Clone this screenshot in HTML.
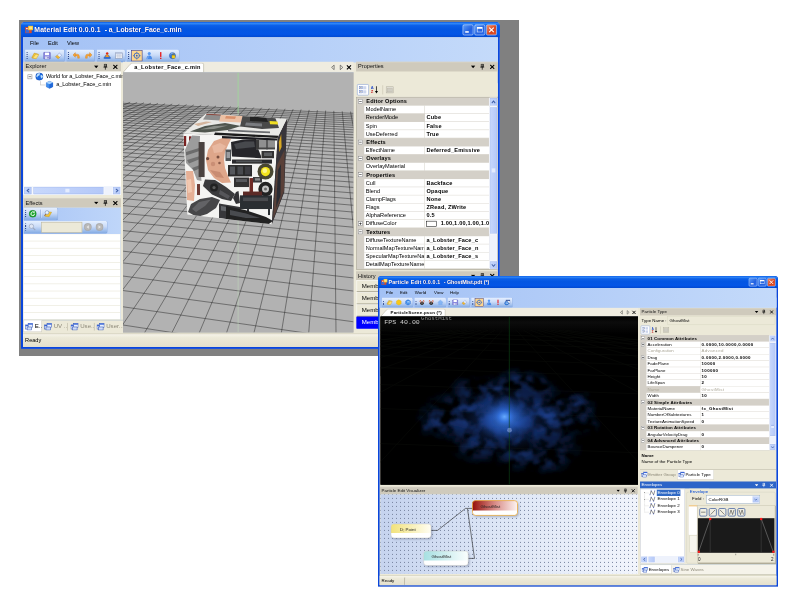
<!DOCTYPE html>
<html lang="en">
<head>
<meta charset="utf-8">
<title>Material Edit / Particle Edit</title>
<style>
*{box-sizing:border-box;margin:0;padding:0}
html,body{width:800px;height:600px;overflow:hidden;background:#fff}
body{position:relative;font-family:"Liberation Sans",sans-serif;font-size:11px;color:#000}
.a{position:absolute}
#bg1{left:19px;top:20px;width:500px;height:336px;background:#808080}
.win{position:absolute;transform-origin:0 0;overflow:hidden;background:#ece9d8;font-size:11px;line-height:13px;white-space:nowrap}
#w1{left:21px;top:22px;width:939px;height:641px;transform:scale(.51);border-radius:8px 8px 0 0}
#w2{left:378px;top:276px;width:1000px;height:777px;transform:scale(.4);border-radius:8px 8px 0 0}
.frame{position:absolute;left:0;top:0;right:0;bottom:0;background:#0a46dc}
.tbar{position:absolute;left:0;top:0;right:0;height:30px;background:linear-gradient(#0a5ce8 0,#2f86f7 3px,#0b5fe8 7px,#0456e2 14px,#0355e6 24px,#0148d0 30px);border-radius:8px 8px 0 0}
.ttl{position:absolute;left:26px;top:7px;color:#fff;font-weight:bold;font-size:13.6px;line-height:16px;text-shadow:1px 1px 0 #0a1883;white-space:pre}
.cb{position:absolute;top:5px;width:21px;height:21px;border:1px solid #fff;border-radius:3px;background:linear-gradient(135deg,#5c9cf8,#2260e0 60%,#2a6cf0)}
.cb.x{background:linear-gradient(135deg,#f0906c,#d8441c 60%,#e2542c)}
.client{position:absolute;left:4px;top:30px;right:4px;bottom:4px;background:#ece9d8}
.menu{position:absolute;left:0;top:0;right:0;height:49px;background:linear-gradient(to right,#a3c1f5,#c4dafa)}
.menu span{position:absolute;top:5px}
.tsc{position:absolute;left:0;right:0;background:linear-gradient(to right,#a3c1f5,#c4dafa)}
.ts{position:absolute;top:0;height:25px;background:linear-gradient(#e6f0ff 0,#cbdcf8 45%,#84abe4 100%);border-radius:0 4px 4px 0;border-bottom:1px solid #5f86c8;border-right:1px solid #7d9fd8}
.grip{position:absolute;left:3px;top:5px;width:2px;height:14px;background:repeating-linear-gradient(#27418a 0,#27418a 2px,transparent 2px,transparent 4px)}
.ic{position:absolute;top:4px;width:16px;height:16px}
.cap{position:absolute;height:19px;background:#cfcabc;color:#111;padding:2px 0 0 4px;border-top:1px solid #e0ddd0}
.cap.act{background:#2c64c8;color:#fff}
.cap i{position:absolute;top:2px;font-style:normal;font-size:11px;font-weight:bold}
.pane{position:absolute;background:#fff}
.row{position:absolute;left:0;right:0;height:16px;line-height:15px}
.pgc{background:#d4d0c8;font-weight:bold;letter-spacing:.25px}
.pgl{position:absolute;top:0;height:16px;background:#fff;border-bottom:1px solid #d4d0c8;border-right:1px solid #d4d0c8;padding-left:3px;overflow:hidden}
.pgv{position:absolute;top:0;height:16px;background:#fff;border-bottom:1px solid #d4d0c8;font-weight:bold;padding-left:3px;overflow:hidden;letter-spacing:.35px}
.pm{position:absolute;width:9px;height:9px;border:1px solid #808080;background:#fff;top:3px}
.pm:before{content:"";position:absolute;left:1px;top:3px;width:5px;height:1px;background:#000}
.pm.plus:after{content:"";position:absolute;left:3px;top:1px;width:1px;height:5px;background:#000}
.sb{position:absolute;background:#f4f3ee}
.sbb{position:absolute;background:linear-gradient(to right,#c8d8fc,#b4c8f8);border:1px solid #fff;border-radius:2px;box-shadow:0 0 0 1px #98b0e8 inset}
.tabs{position:absolute;background:#ece9d8}
.status{position:absolute;left:0;right:0;bottom:0;background:linear-gradient(#f6f4ea,#ece9d8 30%,#e4e0cc);border-top:1px solid #c8c4b0}
#w2 .pgv{letter-spacing:.8px}
#w2 .pgc{letter-spacing:.3px}
</style>
</head>
<body>
<div id="bg1" class="a"></div>
<div id="w1" class="win"><div class="frame"></div>
<div class="tbar">
<svg class="a" style="left:8px;top:7px" width="16" height="16" viewBox="0 0 16 16"><rect x="0" y="3" width="13" height="12" fill="#d84a2a"/><rect x="1" y="8" width="7" height="6" fill="#3a6ad8"/><rect x="6" y="0" width="10" height="9" fill="#f6c634"/><rect x="8" y="2" width="6" height="5" fill="#fde88a"/><rect x="2" y="5" width="3" height="2" fill="#fff"/></svg>
<div class="ttl"><span style="letter-spacing:.2px">Material Edit 0.0.0.1  </span><span style="letter-spacing:-.2px">- a_Lobster_Face_c.min</span></div>
<div class="cb" style="left:866px"><div class="a" style="left:4px;top:12px;width:7px;height:3px;background:#fff"></div></div>
<div class="cb" style="left:889px"><div class="a" style="left:4px;top:4px;width:11px;height:10px;border:1px solid #fff;border-top-width:3px"></div></div>
<div class="cb x" style="left:912px"><svg class="a" style="left:3px;top:3px" width="13" height="13" viewBox="0 0 13 13"><path d="M2 2L11 11M11 2L2 11" stroke="#fff" stroke-width="2.2"/></svg></div>
</div>
<div class="client">
<div class="menu"><span style="left:13.5px">File</span><span style="left:49px">Edit</span><span style="left:86px">View</span></div>
<div class="tsc" style="top:24px;height:25px">
<div class="ts" style="left:4px;width:78px"><div class="grip"></div><svg class="ic" style="left:11.5px" viewBox="0 0 16 16"><path d="M1 12L6 3l8 2-5 9z" fill="#f2c53a" stroke="#b88a18" stroke-width=".8"/><path d="M3 13L9 5l6 1-5 8z" fill="#fbe27a" stroke="#c89a20" stroke-width=".7"/></svg><svg class="ic" style="left:34.5px" viewBox="0 0 16 16"><rect x="1.5" y="1.5" width="13" height="13" rx="1" fill="#8a88e0" stroke="#5a58b8"/><rect x="4" y="2" width="8" height="5" fill="#fff"/><rect x="4" y="9.5" width="8" height="5" fill="#d8d8f0"/><rect x="9" y="10.5" width="2" height="3" fill="#5a58b8"/></svg><svg class="ic" style="left:57.5px" viewBox="0 0 16 16"><path d="M2 10l7-7 5 4-7 7z" fill="#e8eefc" stroke="#6a86c8" stroke-width=".8"/><path d="M2 10l3-3 5 4-3 3z" fill="#f2b830" stroke="#b88a18" stroke-width=".7"/></svg></div>
<div class="ts" style="left:85px;width:56px"><div class="grip"></div><svg class="ic" style="left:11.5px" viewBox="0 0 16 16"><path d="M3 5h6a4.5 4.5 0 0 1 4.5 4.5V13h-3.5V9.8a1.3 1.3 0 0 0-1.3-1.3H3z" fill="#f7a43a" stroke="#d07c10" stroke-width=".7"/><path d="M5.5 2L1 6.7l4.5 4.4z" fill="#f7a43a" stroke="#d07c10" stroke-width=".7"/></svg><svg class="ic" style="left:34.5px" viewBox="0 0 16 16"><g transform="matrix(-1 0 0 1 16 0)"><path d="M3 5h6a4.5 4.5 0 0 1 4.5 4.5V13h-3.5V9.8a1.3 1.3 0 0 0-1.3-1.3H3z" fill="#f7a43a" stroke="#d07c10" stroke-width=".7"/><path d="M5.5 2L1 6.7l4.5 4.4z" fill="#f7a43a" stroke="#d07c10" stroke-width=".7"/></g></svg></div>
<div class="ts" style="left:145px;width:56px"><div class="grip"></div><svg class="ic" style="left:11.5px" viewBox="0 0 16 16"><path d="M1 13l4-6h6l4 6z" fill="#4a88e0" stroke="#2858b0" stroke-width=".7"/><path d="M4 11l4-7 4 7z" fill="#f4a030" stroke="#b86a10" stroke-width=".7"/><circle cx="8" cy="3.5" r="2.3" fill="#e02818"/><rect x="2" y="11" width="12" height="3" fill="#2a68d0"/></svg><svg class="ic" style="left:34.5px" viewBox="0 0 16 16"><rect x="1.5" y="2.5" width="13" height="11" fill="#fff" stroke="#7c88a8"/><rect x="2" y="3" width="12" height="2.5" fill="#b8c4e0"/><path d="M2 8h12M2 10.5h12M6 5v8M10 5v8" stroke="#a0a8c0" stroke-width=".8"/></svg></div>
<div class="ts" style="left:203px;width:104px"><div class="grip"></div><div class="a" style="left:9px;top:1px;width:22px;height:22px;background:#fdd58c;border:1px solid #1a2a9c"></div><svg class="ic" style="left:12px" viewBox="0 0 16 16"><circle cx="8" cy="8" r="5.2" fill="none" stroke="#2860c8" stroke-width="1.6"/><circle cx="8" cy="8" r="1.8" fill="#2860c8"/><path d="M8 0v4M8 12v4M0 8h4M12 8h4" stroke="#2860c8" stroke-width="1.2"/></svg><svg class="ic" style="left:35.5px" viewBox="0 0 16 16"><circle cx="8.5" cy="4" r="3" fill="#5a9af0"/><path d="M3 15c0-5 2-7.5 5.5-7.5S14 10 14 15z" fill="#4a8ae8"/><path d="M5 15c0-3 1-5 3-5" stroke="#9cc4fa" stroke-width="1.2" fill="none"/></svg><svg class="ic" style="left:58.5px" viewBox="0 0 16 16"><rect x="6.7" y="1" width="2.6" height="9.5" fill="#e81818"/><rect x="6.7" y="12" width="2.6" height="2.6" fill="#e81818"/></svg><svg class="ic" style="left:81.5px" viewBox="0 0 16 16"><circle cx="8" cy="8" r="6" fill="#3a78d8" stroke="#1a48a0" stroke-width=".8"/><path d="M4 5a5 5 0 0 1 8 0" stroke="#bfe0ff" stroke-width="1.5" fill="none"/><rect x="7" y="7" width="6" height="6" fill="#f4d020" stroke="#a08010" stroke-width=".6"/><path d="M8.5 7V5.5a1.5 1.5 0 0 1 3 0V7" stroke="#806808" stroke-width="1" fill="none"/></svg></div>
</div>
<div class="cap" style="left:1px;top:48px;width:191px;height:19px">Explorer<svg class="a" style="right:44px;top:6px" width="9" height="6" viewBox="0 0 9 6"><path d="M0 0.5h9L4.5 5.5z" fill="#000"/></svg><svg class="a" style="right:26px;top:3px" width="9" height="12" viewBox="0 0 9 12"><path d="M2.5 .5h4v5.5h-4zM.5 6.5h8M4.5 6.5v5" stroke="#000" stroke-width="1.3" fill="none"/><path d="M5.5 1v5" stroke="#000" stroke-width="1.2"/></svg><svg class="a" style="right:6px;top:4px" width="10" height="10" viewBox="0 0 10 10"><path d="M1 1l8 8M9 1L1 9" stroke="#000" stroke-width="2.1"/></svg></div>
<div class="pane" style="left:1px;top:67px;width:191px;height:242px">
<div class="pm" style="left:8px;top:6px"></div>
<div class="a" style="left:12px;top:10px;width:0;height:0"></div>
<div class="a" style="left:33px;top:19px;width:1px;height:8px;background:#b0b0b0"></div><div class="a" style="left:33px;top:26px;width:10px;height:1px;background:#b0b0b0"></div>
<svg class="a" style="left:23px;top:2px" width="16" height="16" viewBox="0 0 16 16"><circle cx="8" cy="8" r="7.3" fill="#1c6ae0"/><circle cx="8" cy="8" r="7.3" fill="none" stroke="#0c3ca0" stroke-width=".7"/><path d="M3 5c2-3 5-3 6-2l-1 3-3 1-1 3-2-2zM10 6l3-1 2 3-2 4-2-2z" fill="#bfe4ff"/><path d="M3.5 3.5a6 6 0 0 1 6-1.5" stroke="#e8f6ff" stroke-width="1.2" fill="none"/></svg>
<div class="a" style="left:44px;top:3px;letter-spacing:-.2px">World for a_Lobster_Face_c.min</div>
<svg class="a" style="left:43px;top:18px" width="16" height="16" viewBox="0 0 16 16"><path d="M8 1l6.5 3v8L8 15.5 1.5 12V4z" fill="#3c8cf0" stroke="#1c54b8" stroke-width=".7"/><path d="M8 1l6.5 3L8 7.2 1.5 4z" fill="#a8d4ff"/><path d="M8 7.2V15.5" stroke="#1c54b8" stroke-width=".6"/><path d="M8 7.2l6.5-3.2v8L8 15.5z" fill="#2068d8"/></svg>
<div class="a" style="left:64px;top:19px;letter-spacing:-.2px">a_Lobster_Face_c.min</div>
<div class="sb" style="left:0;bottom:0;width:191px;height:17px;background:#eef2fc">
<div class="sbb" style="left:0;top:0;width:17px;height:17px"><svg class="a" style="left:4px;top:3px" width="8" height="9" viewBox="0 0 8 9"><path d="M6 1L2 4.5 6 8" stroke="#4060a8" stroke-width="2" fill="none"/></svg></div>
<div class="sbb" style="left:18px;top:0;width:140px;height:17px"><div class="a" style="left:63px;top:4px;width:8px;height:7px;background:repeating-linear-gradient(to right,#e4ecfe 0,#e4ecfe 1px,#a4b8ec 1px,#a4b8ec 2px)"></div></div>
<div class="sbb" style="left:174px;top:0;width:17px;height:17px"><svg class="a" style="left:4px;top:3px" width="8" height="9" viewBox="0 0 8 9"><path d="M2 1l4 3.5L2 8" stroke="#4060a8" stroke-width="2" fill="none"/></svg></div>
</div></div>
<div class="cap" style="left:1px;top:315px;width:191px;height:19px">Effects<svg class="a" style="right:44px;top:6px" width="9" height="6" viewBox="0 0 9 6"><path d="M0 0.5h9L4.5 5.5z" fill="#000"/></svg><svg class="a" style="right:26px;top:3px" width="9" height="12" viewBox="0 0 9 12"><path d="M2.5 .5h4v5.5h-4zM.5 6.5h8M4.5 6.5v5" stroke="#000" stroke-width="1.3" fill="none"/><path d="M5.5 1v5" stroke="#000" stroke-width="1.2"/></svg><svg class="a" style="right:6px;top:4px" width="10" height="10" viewBox="0 0 10 10"><path d="M1 1l8 8M9 1L1 9" stroke="#000" stroke-width="2.1"/></svg></div>
<div class="tsc" style="left:1px;top:334px;width:191px;right:auto;height:52px;background:linear-gradient(to right,#a9c5f6,#bfd6f9)"></div>
<div class="ts" style="left:1px;top:334px;width:68px"><div class="grip"></div><svg class="ic" style="left:10px" viewBox="0 0 16 16"><circle cx="8" cy="8" r="7" fill="#1ea830" stroke="#0c7018" stroke-width=".8"/><path d="M11.5 8a3.5 3.5 0 1 1-1.2-2.6" stroke="#fff" stroke-width="1.8" fill="none"/><path d="M9 3.2l3.2.6-1 3z" fill="#fff"/></svg><div class="a" style="left:33px;top:4px;width:1px;height:16px;background:#6a8ccc"></div><div class="a" style="left:34px;top:4px;width:1px;height:16px;background:#f0f6ff"></div><svg class="ic" style="left:40px" viewBox="0 0 16 16"><path d="M2 13l6-9 7 1-5 9z" fill="#f4c430" stroke="#b88a10" stroke-width=".7"/><circle cx="6" cy="5.5" r="3.6" fill="#e8f2ff" stroke="#7890b8" stroke-width="1.2"/><path d="M3.5 8.5L1 12" stroke="#a06020" stroke-width="1.8"/></svg></div>
<div class="ts" style="left:1px;top:360px;width:165px"><div class="grip"></div><svg class="ic" style="left:9px" viewBox="0 0 16 16"><circle cx="6.5" cy="6.5" r="4.3" fill="#dfe6f4" stroke="#9aa6c0" stroke-width="1.4"/><path d="M9.5 9.5L14 14" stroke="#9aa6c0" stroke-width="2.2"/></svg><div class="a" style="left:35px;top:2px;width:80px;height:21px;background:#ece9d8;border:1px solid #b4b09c"></div><svg class="ic" style="left:118px" viewBox="0 0 16 16"><circle cx="8" cy="8" r="7.2" fill="#b8b8b8" stroke="#989898" stroke-width=".8"/><path d="M10 4.5L5.5 8l4.5 3.5z" fill="#e8e8e8"/></svg><svg class="ic" style="left:141px" viewBox="0 0 16 16"><circle cx="8" cy="8" r="7.2" fill="#b8b8b8" stroke="#989898" stroke-width=".8"/><path d="M6 4.5L10.500 8 6 11.5z" fill="#e8e8e8"/></svg></div>
<div class="pane" style="left:1px;top:386px;width:191px;height:168px;border-right:1px solid #b8c8d8"><div class="a" style="left:0;right:0;top:13px;height:1px;background:#e4e2d0"></div><div class="a" style="left:0;right:0;top:27px;height:1px;background:#e4e2d0"></div><div class="a" style="left:0;right:0;top:41px;height:1px;background:#e4e2d0"></div><div class="a" style="left:0;right:0;top:55px;height:1px;background:#e4e2d0"></div><div class="a" style="left:0;right:0;top:69px;height:1px;background:#e4e2d0"></div><div class="a" style="left:0;right:0;top:83px;height:1px;background:#e4e2d0"></div><div class="a" style="left:0;right:0;top:97px;height:1px;background:#e4e2d0"></div><div class="a" style="left:0;right:0;top:111px;height:1px;background:#e4e2d0"></div><div class="a" style="left:0;right:0;top:125px;height:1px;background:#e4e2d0"></div><div class="a" style="left:0;right:0;top:139px;height:1px;background:#e4e2d0"></div><div class="a" style="left:0;right:0;top:153px;height:1px;background:#e4e2d0"></div><div class="a" style="left:0;right:0;top:167px;height:1px;background:#e4e2d0"></div></div>
<div class="tabs" style="left:1px;top:554px;width:195px;height:27px;border-top:1px solid #a8b8c8">
<div class="a" style="left:0px;top:0;width:36px;height:23px;background:#fff;border:1px solid #c8c4b4;border-top:none;color:#000;"><svg class="a" style="left:2px;top:4px" width="16" height="16" viewBox="0 0 16 16"><rect x="1" y="5" width="9" height="8" fill="#e8f0ff" stroke="#2a4cb0"/><rect x="1" y="5" width="9" height="2.5" fill="#3a66d8"/><rect x="6" y="2" width="9" height="8" fill="#e8f0ff" stroke="#2a4cb0"/><rect x="6" y="2" width="9" height="2.5" fill="#3a66d8"/><rect x="4" y="9" width="9" height="6" fill="#cfdcf8" stroke="#2a4cb0"/></svg><span class="a" style="left:21px;top:5px;font-size:12px">E..</span></div><div class="a" style="left:38px;top:0;width:48px;height:23px;color:#8c8878;"><svg class="a" style="left:2px;top:4px" width="16" height="16" viewBox="0 0 16 16"><rect x="1" y="5" width="9" height="8" fill="#e8f0ff" stroke="#2a4cb0"/><rect x="1" y="5" width="9" height="2.5" fill="#3a66d8"/><rect x="6" y="2" width="9" height="8" fill="#e8f0ff" stroke="#2a4cb0"/><rect x="6" y="2" width="9" height="2.5" fill="#3a66d8"/><rect x="4" y="9" width="9" height="6" fill="#cfdcf8" stroke="#2a4cb0"/></svg><span class="a" style="left:21px;top:5px;font-size:12px">UV ..</span></div><div class="a" style="left:90px;top:0;width:48px;height:23px;color:#8c8878;"><svg class="a" style="left:2px;top:4px" width="16" height="16" viewBox="0 0 16 16"><rect x="1" y="5" width="9" height="8" fill="#e8f0ff" stroke="#2a4cb0"/><rect x="1" y="5" width="9" height="2.5" fill="#3a66d8"/><rect x="6" y="2" width="9" height="8" fill="#e8f0ff" stroke="#2a4cb0"/><rect x="6" y="2" width="9" height="2.5" fill="#3a66d8"/><rect x="4" y="9" width="9" height="6" fill="#cfdcf8" stroke="#2a4cb0"/></svg><span class="a" style="left:21px;top:5px;font-size:12px">Use..</span></div><div class="a" style="left:141px;top:0;width:54px;height:23px;color:#8c8878;"><svg class="a" style="left:2px;top:4px" width="16" height="16" viewBox="0 0 16 16"><rect x="1" y="5" width="9" height="8" fill="#e8f0ff" stroke="#2a4cb0"/><rect x="1" y="5" width="9" height="2.5" fill="#3a66d8"/><rect x="6" y="2" width="9" height="8" fill="#e8f0ff" stroke="#2a4cb0"/><rect x="6" y="2" width="9" height="2.5" fill="#3a66d8"/><rect x="4" y="9" width="9" height="6" fill="#cfdcf8" stroke="#2a4cb0"/></svg><span class="a" style="left:21px;top:5px;font-size:12px">User...</span></div>
<div class="a" style="left:86px;top:5px;width:1px;height:15px;background:#b0ac98"></div><div class="a" style="left:138px;top:5px;width:1px;height:15px;background:#b0ac98"></div>
</div>
<div class="a" style="left:196px;top:48px;width:452px;height:21px;background:#efece0;border-bottom:1px solid #9cb4dc"></div>
<svg class="a" style="left:196px;top:50px" width="170" height="19" viewBox="0 0 170 19"><path d="M0 19L14 3q2-2.500 5-2.500H155q3 0 3 3V19z" fill="#fff" stroke="#a8a490" stroke-width="1"/></svg>
<div class="a" style="left:218px;top:53px;font-weight:bold;letter-spacing:.6px">a_Lobster_Face_c.min</div>
<svg class="a" style="left:603px;top:53px" width="42" height="12" viewBox="0 0 42 12"><path d="M7 1.500L2 6l5 4.500z" fill="none" stroke="#333" stroke-width="1.100"/><path d="M19 1.500L24 6l-5 4.500z" fill="none" stroke="#333" stroke-width="1.100"/><path d="M32 2l8 8M40 2l-8 8" stroke="#000" stroke-width="2.200"/></svg>
<div class="a" style="left:196px;top:69px;width:452px;height:510px;overflow:hidden;background:#b2b2b2"><svg class="a" style="left:0;top:0" width="452" height="510" viewBox="123 72.5 230.5 260" preserveAspectRatio="none"><defs><filter id="bl1" x="160" y="100" width="150" height="140" filterUnits="userSpaceOnUse"><feGaussianBlur stdDeviation=".65"/></filter></defs><rect x="100" y="60" width="300" height="300" fill="#b2b2b2"/><path d="M83.3 100.2L-1906.3 783.1M79.7 101.4L535.9 121.3M89.9 100.4L-1906.1 806.4M75.7 102.8L539.9 123.4M96.5 100.7L-1905.9 831.1M71.5 104.2L544.1 125.6M103.1 101L-1905.7 857.5M67.1 105.7L548.5 127.9M109.8 101.3L-1905.4 885.6M62.6 107.3L553 130.3M116.6 101.6L-1905.2 915.6M58 108.9L557.8 132.8M123.4 101.9L-1904.9 947.8M53.2 110.5L562.7 135.4M130.2 102.2L-1904.6 982.4M48.2 112.2L567.9 138.1M137.1 102.5L-1904.3 1019.7M43 114L573.3 141M144 102.8L-1903.9 1059.9M37.7 115.8L579 144M151 103.1L-1903.5 1103.5M32.1 117.7L585 147.1M158 103.4L-1903.1 1150.9M26.3 119.7L591.2 150.4M165.1 103.7L-1902.7 1202.5M20.3 121.8L597.8 153.8M172.2 104L-1902.2 1259.1M14.1 123.9L604.7 157.4M179.4 104.3L-1901.6 1321.4M7.6 126.1L611.9 161.3M186.6 104.6L-1901 1390.3M0.9 128.5L619.6 165.3M193.8 104.9L-1900.3 1466.7M-6.2 130.9L627.7 169.6M201.2 105.2L-1899.6 1552.2M-13.5 133.4L636.3 174.1M208.5 105.5L-1898.7 1648.4M-21.2 136L645.4 178.9M216 105.9L-1897.8 1757.4M-29.2 138.8L655 183.9M223.4 106.2L-1896.7 1882.1M-37.6 141.7L665.3 189.3M230.9 106.5L-1895.4 2025.9M-46.4 144.7L676.3 195.1M238.5 106.8L-1893.9 2193.6M-55.6 147.9L687.9 201.2M246.2 107.2L-1892.2 2392M-65.3 151.2L700.5 207.8M253.8 107.5L-1890.1 2630M-75.5 154.7L713.9 214.9M261.6 107.8L-1887.5 2921.1M-86.2 158.3L728.3 222.5M269.4 108.2L-1884.3 3285M-97.5 162.2L743.9 230.7M277.2 108.5L-1880.2 3753.1M-109.4 166.3L760.8 239.5M285.1 108.8L-1874.7 4377.5M-122 170.6L779.1 249.2M293.1 109.2L-1867 5252.4M-135.3 175.2L799 259.6M301.1 109.5L-1842.4 6527M-149.4 180L820.8 271.1M309.2 109.9L-1282.5 6527M-164.4 185.2L844.8 283.7M317.4 110.2L-722.5 6527M-180.4 190.7L871.2 297.6M325.6 110.6L-162.5 6527M-197.4 196.5L900.5 313M333.8 110.9L397.4 6527M-215.6 202.8L933.2 330.2M342.2 111.3L957.4 6527M-235.1 209.5L969.8 349.5M350.5 111.6L1517.3 6527M-256.1 216.6L1011.2 371.2M359 112L2077.3 6527M-278.6 224.4L1058.4 396.1M367.5 112.4L2637.2 6527M-302.9 232.7L1112.6 424.6M376.1 112.7L3197.2 6527M-329.3 241.8L1175.6 457.7M384.7 113.1L3757.1 6527M-357.9 251.6L1249.7 496.7M393.4 113.5L4317.1 6527M-389.1 262.3L1338.1 543.1M402.2 113.8L4877 6527M-423.2 274L1445.3 599.5M411 114.2L5437 6527M-460.8 286.9L1578.1 669.3M419.9 114.6L5997 6527M-502.3 301.1L1746.9 758.1M428.9 115L6556.9 6527M-548.3 317L1968.6 874.7M438 115.4L7116.9 6527M-599.7 334.6L2272.8 1034.7M447.1 115.8L7676.8 6527M-657.5 354.4L2716 1267.8M456.3 116.2L8236.8 6527M-722.9 376.9L3421.7 1638.9M465.5 116.6L8796.7 6527M-797.6 402.5L4721.1 2322.2M474.8 117L9356.7 6527M-883.7 432.1L7907.6 3998M484.3 117.4L9916.6 6527M-983.9 466.5L11475.9 6527M493.7 117.8L10476.6 6527M-1102.1 507L8809.6 6527M503.3 118.2L11036.5 6527M-1243.7 555.6L6143.2 6527M512.9 118.6L11596.5 6527M-1416.2 614.9L3476.9 6527M522.6 119L12156.4 6527M-1631.2 688.6L810.5 6527M532.4 119.4L12716.4 6527M-1906.3 783.1L-1855.8 6527" stroke="#1e1e1e" stroke-width=".5" fill="none" opacity=".92"/><path d="M238.1 72V332" stroke="#c4e8c0" stroke-width=".5" opacity=".8"/><polygon points="183.4,133.6 277.7,137.9 271.8,224.2 187.3,214.4" fill="#f4f4f2"/><polygon points="205.8,113.4 287,119.1 277.7,137.9 183.4,133.6" fill="#e9e9e6"/><polygon points="277.7,137.9 287,119.1 284.2,192.1 271.8,224.2" fill="#3a3836"/><clipPath id="cf"><polygon points="183.4,133.6 277.7,137.9 271.8,224.2 187.3,214.4"/></clipPath><clipPath id="ct"><polygon points="205.8,113.4 287,119.1 277.7,137.9 183.4,133.6"/></clipPath><clipPath id="cr"><polygon points="277.7,137.9 287,119.1 284.2,192.1 271.8,224.2"/></clipPath><g clip-path="url(#cf)"><g filter="url(#bl1)"><rect x="183.8" y="136" width="2.4" height="10" fill="#7a2224"/><rect x="189" y="136.3" width="2.5" height="10" fill="#7a2224"/><rect x="187" y="146" width="1" height="4" fill="#7a2224"/><polygon points="192,135.5 200,136 199.5,150 200,165 201.5,181 197,180 193,170 186,163 185,150 188,143" fill="#9c9c9c"/><polygon points="186,152 199,148 199.5,151 186,155.5" fill="#6c6c6c"/><polygon points="187,160 200,156 200,159 189,163.5" fill="#707070"/><polygon points="192,168 200,165 200.5,168 194,171" fill="#6c6c6c"/><rect x="198.6" y="142" width="6" height="35" fill="#4a4240"/><polygon points="231,139 224,137.5 214,141 208,150 206,160 208,170 214,178 222,183 231,182.5 228,176 225,168 224,160 225,152 228,145" fill="#dea68a"/><polygon points="212,146 220,143 226,146 222,152 214,153" fill="#e8b8a0"/><circle cx="207.6" cy="158.6" r="1.6" fill="#6a4438"/><circle cx="218" cy="157" r="1.5" fill="#7a5040"/><circle cx="219.5" cy="163" r="1.3" fill="#8a5a48"/><circle cx="213" cy="164" r="2.2" fill="#c98e74"/><polygon points="210,170 220,172 224,178 216,177" fill="#c88c72"/><rect x="225.5" y="149.5" width="5.5" height="11.5" fill="#505256"/><rect x="226.5" y="152" width="3.5" height="6" fill="#9a9ca0"/><polygon points="231,142 243,139.5 256,139 257,146 261,156 261,158.2 232,156.5 231.5,150" fill="#28282c"/><polygon points="234,144 245,141.5 254,141.5 255,147 236,149" fill="#46484e"/><rect x="256" y="140" width="19" height="9.3" fill="#909090"/><rect x="256" y="140" width="3" height="9.3" fill="#3a3a3a"/><rect x="266" y="140" width="2" height="9.3" fill="#5a5a5a"/><rect x="259" y="147.5" width="16" height="1.8" fill="#444"/><rect x="261.5" y="151" width="12.5" height="7.2" fill="#303032"/><rect x="264" y="152.5" width="8" height="3.5" fill="#5c5e62"/><rect x="232" y="159.5" width="40" height="4.1" fill="#2c2c2e"/><rect x="236" y="160.5" width="26" height="1.7" fill="#505256"/><rect x="228" y="165" width="24" height="11.4" fill="#2a2a2c"/><rect x="230" y="166.5" width="5" height="8" fill="#55585c"/><rect x="237.5" y="166.5" width="5.5" height="8" fill="#4a4c50"/><rect x="245" y="166.5" width="5.5" height="8" fill="#3c3e42"/><rect x="234" y="177.5" width="15" height="9.5" fill="#303032"/><rect x="236" y="179" width="11" height="3" fill="#56585c"/><circle cx="265.5" cy="171.5" r="8" fill="#4a4630"/><circle cx="265.5" cy="171.5" r="4.6" fill="#f4e41c"/><circle cx="264.8" cy="170.6" r="2.3" fill="#fff58a"/><rect x="253" y="177" width="9" height="5.5" fill="#38383a"/><rect x="255" y="178.2" width="5" height="2.4" fill="#8a8a8a"/><circle cx="265.5" cy="189" r="7.2" fill="#202022"/><circle cx="265.5" cy="189" r="3.5" fill="#c4c4c4"/><circle cx="265.5" cy="189" r="1.5" fill="#6a6a6a"/><rect x="249.5" y="178" width="3.5" height="15" fill="#6e2a26"/><rect x="243" y="191.5" width="19" height="4.5" fill="#5c2c26"/><rect x="240" y="195.3" width="32" height="13.7" fill="#2c2e32"/><rect x="243" y="197.5" width="25" height="3.5" fill="#484b50"/><rect x="247" y="209" width="2" height="5" fill="#2c2e32"/><rect x="268" y="209" width="2" height="6" fill="#2c2e32"/><polygon points="219,203.5 240,207 240,221 219,218" fill="#38383a"/><polygon points="221,206 238,209 238,213 221,210.5" fill="#64666a"/><polygon points="226,206 245,210 266,217 273,221 268,224.5 250,223 226,219" fill="#222224"/><polygon points="230,210 246,213.5 260,218 246,218 230,215" fill="#4a4c50"/><polygon points="203,186 205,179.5 215,180 226,187 235,194 231,201 222,199 212,194.5" fill="#3a3a3c"/><circle cx="214" cy="187.5" r="4" fill="#242424"/><circle cx="214" cy="187.5" r="1.6" fill="#5a5a5a"/><polygon points="220,190 230,196 228,199 219,194" fill="#56565a"/><polygon points="236,192 238.5,191 240,203 236,204 233,198" fill="#323234"/><polygon points="188,212 191,204 200,199 212,197 220,200 216,208 207,214 197,217" fill="#464648"/><polygon points="192,209 199,202 211,199.5 205,206 196,212" fill="#646466"/><polygon points="186,171 193,171 195,185 194,201 187,200" fill="#e6b096"/><polygon points="187,180 191,179 192,192 188,193" fill="#f2c8b0"/><rect x="197" y="184" width="3" height="11" fill="#6e3a34"/><polygon points="222,136 277.6,138.4 277.4,140.6 222,138.2" fill="#1e1e20"/></g></g><g clip-path="url(#ct)"><g filter="url(#bl1)"><polygon points="207,113.5 221,114.2 220,120.5 203,119.5" fill="#8e8e8e"/><polygon points="207,113.5 221,114.2 220.8,115.6 206,114.8" fill="#8a4a40"/><polygon points="221,115 243,116 241,122.5 219,121.5" fill="#ecc0a4"/><polygon points="226,116 236,116.5 235,119 225,118.5" fill="#d8906c"/><polygon points="190,131.5 205,126 225,123 241,126 228,130 205,132.5" fill="#50544e"/><polygon points="200,129.5 214,126 228,125.5 214,129" fill="#8a8e88"/><polygon points="243,114 275,117 279,128 262,129 240,126.5" fill="#48484a"/><polygon points="250,116 266,117.5 268,122 250,121" fill="#222"/><polygon points="246,122.5 262,123.5 262,126.5 245,125.5" fill="#7a7c80"/><polygon points="269.5,121 277.5,121.5 278,124.5 270,124.2" fill="#f0de20"/><polygon points="215,132.5 278.5,135.8 277.7,138.2 214,135" fill="#1c1c1e"/><polygon points="228,129.5 270,131.5 270,133.3 228,131.3" fill="#6a6c70"/><polygon points="194,124 206,121.5 212,122 198,126" fill="#d4b49c"/></g></g><g clip-path="url(#cr)"><g filter="url(#bl1)"><polygon points="277.7,137.9 287,119.1 284.2,192.1 271.8,224.2" fill="#38343a"/><polygon points="278.8,142 281.2,134 281.6,147 279.3,152" fill="#d8a820"/><polygon points="277,165 284.5,150 284.3,190 273,219" fill="#5a4038"/><polygon points="278,170 281,164 280.5,196 276,208" fill="#2c2c30"/></g></g><path d="M238.1 72V113" stroke="#8cd488" stroke-width=".55"/></svg></div>
<div class="cap" style="left:653px;top:48px;width:278px;height:19px">Properties<svg class="a" style="right:44px;top:6px" width="9" height="6" viewBox="0 0 9 6"><path d="M0 0.5h9L4.5 5.5z" fill="#000"/></svg><svg class="a" style="right:26px;top:3px" width="9" height="12" viewBox="0 0 9 12"><path d="M2.5 .5h4v5.5h-4zM.5 6.5h8M4.5 6.5v5" stroke="#000" stroke-width="1.3" fill="none"/><path d="M5.5 1v5" stroke="#000" stroke-width="1.2"/></svg><svg class="a" style="right:6px;top:4px" width="10" height="10" viewBox="0 0 10 10"><path d="M1 1l8 8M9 1L1 9" stroke="#000" stroke-width="2.1"/></svg></div>
<div class="a" style="left:653px;top:90px;width:278px;height:26px;background:#ece9d8"></div>
<div class="a" style="left:655px;top:92px;width:23px;height:22px;background:#fff;border:1px solid #7c98d0;border-radius:2px"></div>
<svg class="a" style="left:659px;top:95px" width="16" height="16" viewBox="0 0 16 16"><rect x="1" y="1" width="5" height="5" fill="#fff" stroke="#4868b8" stroke-width=".9"/><rect x="1" y="9" width="5" height="5" fill="#fff" stroke="#4868b8" stroke-width=".9"/><path d="M2.500 3.500h2M2.500 11.500h2" stroke="#000"/><path d="M8 2h6M8 4h6M8 6h6M8 10h6M8 12h6M8 14h6" stroke="#90a4d8" stroke-width="1"/></svg>
<svg class="a" style="left:682px;top:95px" width="16" height="16" viewBox="0 0 16 16"><text x="0" y="7" font-size="8" font-weight="bold" fill="#2c50c8" font-family="Liberation Sans,sans-serif">A</text><text x="0" y="15" font-size="8" font-weight="bold" fill="#c82c2c" font-family="Liberation Sans,sans-serif">Z</text><path d="M11 1v11" stroke="#000" stroke-width="1.400"/><path d="M8 10.500h6L11 15z" fill="#000"/></svg>
<div class="a" style="left:705px;top:94px;width:1px;height:18px;background:#c0bca8"></div>
<svg class="a" style="left:711px;top:95px" width="16" height="16" viewBox="0 0 16 16"><rect x="1" y="2" width="14" height="12" fill="#e0ded4" stroke="#b0ac9c"/><rect x="3" y="5" width="10" height="7" fill="#d0cec4" stroke="#b8b4a4" stroke-width=".7"/></svg>
<div class="a" style="left:653px;top:117px;width:278px;height:339px;background:#d4d0c8;overflow:hidden;border:1px solid #a8a490">
<div class="row pgc" style="top:0px"><div class="pm" style="left:3px"></div><span class="a" style="left:19px">Editor Options</span></div>
<div class="row" style="top:16px"><div class="pgl" style="left:15px;width:119px;">ModelName</div><div class="pgv" style="left:134px;width:126px"></div></div>
<div class="row" style="top:32px"><div class="pgl" style="left:15px;width:119px;background:#d4d0c8;">RenderMode</div><div class="pgv" style="left:134px;width:126px">Cube</div></div>
<div class="row" style="top:48px"><div class="pgl" style="left:15px;width:119px;">Spin</div><div class="pgv" style="left:134px;width:126px">False</div></div>
<div class="row" style="top:64px"><div class="pgl" style="left:15px;width:119px;">UseDeferred</div><div class="pgv" style="left:134px;width:126px">True</div></div>
<div class="row pgc" style="top:80px"><div class="pm" style="left:3px"></div><span class="a" style="left:19px">Effects</span></div>
<div class="row" style="top:96px"><div class="pgl" style="left:15px;width:119px;">EffectName</div><div class="pgv" style="left:134px;width:126px">Deferred_Emissive</div></div>
<div class="row pgc" style="top:112px"><div class="pm" style="left:3px"></div><span class="a" style="left:19px">Overlays</span></div>
<div class="row" style="top:128px"><div class="pgl" style="left:15px;width:119px;">OverlayMaterial</div><div class="pgv" style="left:134px;width:126px"></div></div>
<div class="row pgc" style="top:144px"><div class="pm" style="left:3px"></div><span class="a" style="left:19px">Properties</span></div>
<div class="row" style="top:160px"><div class="pgl" style="left:15px;width:119px;">Cull</div><div class="pgv" style="left:134px;width:126px">Backface</div></div>
<div class="row" style="top:176px"><div class="pgl" style="left:15px;width:119px;">Blend</div><div class="pgv" style="left:134px;width:126px">Opaque</div></div>
<div class="row" style="top:192px"><div class="pgl" style="left:15px;width:119px;">ClampFlags</div><div class="pgv" style="left:134px;width:126px">None</div></div>
<div class="row" style="top:208px"><div class="pgl" style="left:15px;width:119px;">Flags</div><div class="pgv" style="left:134px;width:126px">ZRead, ZWrite</div></div>
<div class="row" style="top:224px"><div class="pgl" style="left:15px;width:119px;">AlphaReference</div><div class="pgv" style="left:134px;width:126px">0.5</div></div>
<div class="row" style="top:240px"><div class="pm plus" style="left:3px"></div><div class="pgl" style="left:15px;width:119px;">DiffuseColor</div><div class="pgv" style="left:134px;width:126px"><span class="a" style="left:3px;top:2px;width:20px;height:11px;border:1px solid #000;background:#fff"></span><span style="margin-left:28px">1.00,1.00,1.00,1.00</span></div></div>
<div class="row pgc" style="top:256px"><div class="pm" style="left:3px"></div><span class="a" style="left:19px">Textures</span></div>
<div class="row" style="top:272px"><div class="pgl" style="left:15px;width:119px;">DiffuseTextureName</div><div class="pgv" style="left:134px;width:126px">a_Lobster_Face_c</div></div>
<div class="row" style="top:288px"><div class="pgl" style="left:15px;width:119px;">NormalMapTextureName</div><div class="pgv" style="left:134px;width:126px">a_Lobster_Face_n</div></div>
<div class="row" style="top:304px"><div class="pgl" style="left:15px;width:119px;">SpecularMapTextureName</div><div class="pgv" style="left:134px;width:126px">a_Lobster_Face_s</div></div>
<div class="row" style="top:320px"><div class="pgl" style="left:15px;width:119px;">DetailMapTextureName</div><div class="pgv" style="left:134px;width:126px"></div></div>
<div class="sb" style="left:260px;top:0;width:17px;height:337px;background:#eef2fc">
<div class="sbb" style="left:0;top:0;width:17px;height:17px"><svg class="a" style="left:3px;top:4px" width="9" height="8" viewBox="0 0 9 8"><path d="M1 6l3.500-4L8 6" stroke="#4060a8" stroke-width="2" fill="none"/></svg></div>
<div class="sbb" style="left:0;top:18px;width:17px;height:250px"><div class="a" style="left:4px;top:120px;width:7px;height:8px;background:repeating-linear-gradient(#e4ecfe 0,#e4ecfe 1px,#a4b8ec 1px,#a4b8ec 2px)"></div></div>
<div class="sbb" style="left:0;bottom:0;width:17px;height:17px"><svg class="a" style="left:3px;top:4px" width="9" height="8" viewBox="0 0 9 8"><path d="M1 2l3.500 4L8 2" stroke="#4060a8" stroke-width="2" fill="none"/></svg></div>
</div></div>
<div class="cap" style="left:653px;top:458px;width:278px;height:19px">History<svg class="a" style="right:44px;top:6px" width="9" height="6" viewBox="0 0 9 6"><path d="M0 0.5h9L4.5 5.5z" fill="#000"/></svg><svg class="a" style="right:26px;top:3px" width="9" height="12" viewBox="0 0 9 12"><path d="M2.5 .5h4v5.5h-4zM.5 6.5h8M4.5 6.5v5" stroke="#000" stroke-width="1.3" fill="none"/><path d="M5.5 1v5" stroke="#000" stroke-width="1.2"/></svg><svg class="a" style="right:6px;top:4px" width="10" height="10" viewBox="0 0 10 10"><path d="M1 1l8 8M9 1L1 9" stroke="#000" stroke-width="2.1"/></svg></div>
<div class="a" style="left:654px;top:476px;width:276px;height:23px;background:#ece9d8;border:1px solid;border-color:#fff #9c9884 #9c9884 #fff;box-shadow:1px 1px 0 #6c6858;font-size:12px;padding:4px 0 0 9px">Member Changed</div>
<div class="a" style="left:654px;top:500px;width:276px;height:23px;background:#ece9d8;border:1px solid;border-color:#fff #9c9884 #9c9884 #fff;box-shadow:1px 1px 0 #6c6858;font-size:12px;padding:4px 0 0 9px">Member Changed</div>
<div class="a" style="left:654px;top:524px;width:276px;height:23px;background:#ece9d8;border:1px solid;border-color:#fff #9c9884 #9c9884 #fff;box-shadow:1px 1px 0 #6c6858;font-size:12px;padding:4px 0 0 9px">Member Changed</div>
<div class="a" style="left:654px;top:548px;width:276px;height:23px;background:#0000ff;color:#fff;border:1px solid #0000ff;font-size:12px;padding:4px 0 0 9px">Member Changed</div>
<div class="status" style="height:26px"><span class="a" style="left:4px;top:6px">Ready</span></div>
</div></div>
<div id="w2" class="win"><div class="frame"></div>
<div class="tbar">
<svg class="a" style="left:8px;top:7px" width="16" height="16" viewBox="0 0 16 16"><rect x="0" y="3" width="13" height="12" fill="#d84a2a"/><rect x="1" y="8" width="7" height="6" fill="#3a6ad8"/><rect x="6" y="0" width="10" height="9" fill="#f6c634"/><rect x="8" y="2" width="6" height="5" fill="#fde88a"/><rect x="2" y="5" width="3" height="2" fill="#fff"/></svg>
<div class="ttl"><span style="letter-spacing:.3px">Particle Edit 0.0.0.1  </span><span style="letter-spacing:-.22px">- GhostMist.pdt (*)</span></div>
<div class="cb" style="left:927px"><div class="a" style="left:4px;top:12px;width:7px;height:3px;background:#fff"></div></div>
<div class="cb" style="left:950px"><div class="a" style="left:4px;top:4px;width:11px;height:10px;border:1px solid #fff;border-top-width:3px"></div></div>
<div class="cb x" style="left:973px"><svg class="a" style="left:3px;top:3px" width="13" height="13" viewBox="0 0 13 13"><path d="M2 2L11 11M11 2L2 11" stroke="#fff" stroke-width="2.2"/></svg></div>
</div>
<div class="client">
<div class="menu"><span style="left:16px">File</span><span style="left:51px">Edit</span><span style="left:88px">World</span><span style="left:136px">View</span><span style="left:176px">Help</span></div>
<div class="tsc" style="top:24px;height:25px">
<div class="ts" style="left:6px;width:78px"><div class="grip"></div><svg class="ic" style="left:10.5px" viewBox="0 0 16 16"><path d="M1 12L6 3l8 2-5 9z" fill="#f2c53a" stroke="#b88a18" stroke-width=".8"/><path d="M3 13L9 5l6 1-5 8z" fill="#fbe27a" stroke="#c89a20" stroke-width=".7"/></svg><svg class="ic" style="left:33.5px" viewBox="0 0 16 16"><path d="M8 1l6 3.500v7L8 15l-6-3.500v-7z" fill="#f8c818" stroke="#d8a008" stroke-width=".6"/></svg><svg class="ic" style="left:56.5px" viewBox="0 0 16 16"><path d="M8 1l6 3.500v7L8 15l-6-3.500v-7z" fill="#3a8ae8" stroke="#1c5cc0" stroke-width=".7"/><path d="M5 11l6-6M5 6h6v5" stroke="#d8ecff" stroke-width="1.300" fill="none"/></svg></div>
<div class="ts" style="left:87px;width:80px"><div class="grip"></div><svg class="ic" style="left:10.5px" viewBox="0 0 16 16"><circle cx="8" cy="10" r="4.500" fill="#2a2a2a"/><circle cx="8" cy="9.500" r="2" fill="#888"/><path d="M3 2l3 4M13 2l-3 4M2 6l3 2M14 6l-3 2" stroke="#e84a18" stroke-width="1.800"/></svg><svg class="ic" style="left:33.5px" viewBox="0 0 16 16"><circle cx="8" cy="10" r="4.500" fill="#2a2a2a"/><circle cx="8" cy="9.500" r="2" fill="#888"/><path d="M3 2l3 4M13 2l-3 4M2 6l3 2M14 6l-3 2" stroke="#e84a18" stroke-width="1.800"/></svg><svg class="ic" style="left:56.5px" viewBox="0 0 16 16"><path d="M8 2l7 6h-2.500v6h-9V8H1z" fill="#7ab0f4" stroke="#5a90e0" stroke-width=".6" opacity=".85"/></svg></div>
<div class="ts" style="left:170px;width:56px"><div class="grip"></div><svg class="ic" style="left:10.5px" viewBox="0 0 16 16"><rect x="1.5" y="1.5" width="13" height="13" rx="1" fill="#8a88e0" stroke="#5a58b8"/><rect x="4" y="2" width="8" height="5" fill="#fff"/><rect x="4" y="9.5" width="8" height="5" fill="#d8d8f0"/><rect x="9" y="10.5" width="2" height="3" fill="#5a58b8"/></svg><svg class="ic" style="left:33.5px" viewBox="0 0 16 16"><path d="M2 10l7-7 5 4-7 7z" fill="#e8eefc" stroke="#6a86c8" stroke-width=".8"/><path d="M2 10l3-3 5 4-3 3z" fill="#f2b830" stroke="#b88a18" stroke-width=".7"/></svg></div>
<div class="ts" style="left:229px;width:104px"><div class="grip"></div><div class="a" style="left:9px;top:1px;width:22px;height:22px;background:#fdd58c;border:1px solid #1a2a9c"></div><svg class="ic" style="left:12px" viewBox="0 0 16 16"><circle cx="8" cy="8" r="5.2" fill="none" stroke="#2860c8" stroke-width="1.6"/><circle cx="8" cy="8" r="1.8" fill="#2860c8"/><path d="M8 0v4M8 12v4M0 8h4M12 8h4" stroke="#2860c8" stroke-width="1.2"/></svg><svg class="ic" style="left:35.5px" viewBox="0 0 16 16"><circle cx="8.5" cy="4" r="3" fill="#5a9af0"/><path d="M3 15c0-5 2-7.5 5.5-7.5S14 10 14 15z" fill="#4a8ae8"/><path d="M5 15c0-3 1-5 3-5" stroke="#9cc4fa" stroke-width="1.2" fill="none"/></svg><svg class="ic" style="left:58.5px" viewBox="0 0 16 16"><rect x="6.7" y="1" width="2.6" height="9.5" fill="#e81818"/><rect x="6.7" y="12" width="2.6" height="2.6" fill="#e81818"/></svg><svg class="ic" style="left:81.5px" viewBox="0 0 16 16"><rect x="5" y="2" width="10" height="8" fill="#fff" stroke="#2a4890" stroke-width="1"/><rect x="5" y="2" width="10" height="2" fill="#2a4890"/><circle cx="6.500" cy="10" r="5" fill="#3a84e0" stroke="#1a4ca8" stroke-width=".7"/><path d="M4 10h5M7 8l2 2-2 2" stroke="#fff" stroke-width="1.200" fill="none"/></svg></div>
</div>
<div class="a" style="left:2px;top:50px;width:644px;height:20.5px;background:#efece0;border-bottom:1px solid #9cb4dc"></div>
<svg class="a" style="left:2.5px;top:51.5px" width="170" height="19" viewBox="0 0 170 19"><path d="M0 19L14 3q2-2.500 5-2.500H158q3 0 3 3V19z" fill="#fff" stroke="#a8a490" stroke-width="1"/></svg>
<div class="a" style="left:27.2px;top:54.5px;font-weight:bold;letter-spacing:.6px">ParticleScene.pscn (*)</div>
<svg class="a" style="left:599.8px;top:54.5px" width="42" height="12" viewBox="0 0 42 12"><path d="M7 1.500L2 6l5 4.500z" fill="none" stroke="#333" stroke-width="1.100"/><path d="M19 1.500L24 6l-5 4.500z" fill="none" stroke="#333" stroke-width="1.100"/><path d="M32 2l8 8M40 2l-8 8" stroke="#000" stroke-width="2.200"/></svg>
<div class="a" style="left:2px;top:70.5px;width:644px;height:421.5px;overflow:hidden;background:#000"><svg class="a" style="left:0;top:0" width="644" height="421.5" viewBox="380.4 316.2 257.6 168.6" preserveAspectRatio="none"><defs><linearGradient id="sky" x1="0" y1="0" x2="0" y2="1"><stop offset="0" stop-color="#000"/><stop offset=".1" stop-color="#0c0c0c"/><stop offset=".3" stop-color="#000"/></linearGradient></defs><rect x="370" y="310" width="280" height="180" fill="#000"/><rect x="370" y="316" width="280" height="60" fill="url(#sky)"/><path d="M453.3 330L-730.7 490M460.3 330L-575.7 490M467.3 330L-420.7 490M474.3 330L-265.7 490M481.3 330L-110.7 490M488.3 330L44.3 490M495.3 330L199.3 490M502.3 330L354.3 490M509.3 330L509.3 490M516.3 330L664.3 490M523.3 330L819.3 490M530.3 330L974.3 490M537.3 330L1129.3 490M544.3 330L1284.3 490M551.3 330L1439.3 490M558.3 330L1594.3 490M565.3 330L1749.3 490M370 330L650 340M370 334L650 344M370 339L650 349M370 346L650 356M370 355L650 365M370 367L650 377M370 384L650 394M370 408L650 418M370 443L650 453" stroke="#0c0e0a" stroke-width=".5" fill="none"/><defs><radialGradient id="gm1"><stop offset="0" stop-color="#1f48a0" stop-opacity=".95"/><stop offset=".55" stop-color="#153274" stop-opacity=".6"/><stop offset="1" stop-color="#10285c" stop-opacity="0"/></radialGradient><radialGradient id="gm0"><stop offset="0" stop-color="#2a62d0" stop-opacity=".8"/><stop offset=".45" stop-color="#1f4aa4" stop-opacity=".5"/><stop offset="1" stop-color="#10285c" stop-opacity="0"/></radialGradient><radialGradient id="gm3"><stop offset="0" stop-color="#66aaff"/><stop offset=".45" stop-color="#2f6ee0" stop-opacity=".7"/><stop offset="1" stop-color="#1c3f8a" stop-opacity="0"/></radialGradient><filter id="mist" x="400" y="355" width="215" height="130" filterUnits="userSpaceOnUse"><feTurbulence type="fractalNoise" baseFrequency=".075 .095" numOctaves="3" seed="5" result="n"/><feColorMatrix in="n" type="matrix" values="0 0 0 0 1 0 0 0 0 1 0 0 0 0 1 0 0 0 3.6 -1.3" result="m"/><feComposite in="SourceGraphic" in2="m" operator="in" result="c"/><feGaussianBlur in="c" stdDeviation=".9"/></filter></defs><ellipse cx="506" cy="420" rx="54" ry="35" fill="url(#gm0)" opacity=".8"/><g filter="url(#mist)"><ellipse cx="506" cy="421" rx="70" ry="42" fill="url(#gm1)" opacity="0.9"/><ellipse cx="465" cy="415" rx="48" ry="30" fill="url(#gm1)" opacity="0.8"/><ellipse cx="548" cy="416" rx="50" ry="32" fill="url(#gm1)" opacity="0.8"/><ellipse cx="440" cy="420" rx="26" ry="20" fill="url(#gm1)" opacity="0.7"/><ellipse cx="578" cy="406" rx="20" ry="18" fill="url(#gm1)" opacity="0.7"/><ellipse cx="522" cy="452" rx="34" ry="22" fill="url(#gm1)" opacity="0.7"/><ellipse cx="478" cy="446" rx="30" ry="20" fill="url(#gm1)" opacity="0.6"/><ellipse cx="560" cy="448" rx="24" ry="18" fill="url(#gm1)" opacity="0.5"/><ellipse cx="500" cy="392" rx="34" ry="20" fill="url(#gm1)" opacity="0.7"/><ellipse cx="537" cy="385" rx="22" ry="14" fill="url(#gm1)" opacity="0.6"/><ellipse cx="468" cy="388" rx="20" ry="14" fill="url(#gm1)" opacity="0.5"/><ellipse cx="590" cy="425" rx="12" ry="12" fill="url(#gm1)" opacity="0.4"/><ellipse cx="425" cy="428" rx="12" ry="10" fill="url(#gm1)" opacity="0.4"/><ellipse cx="518" cy="379" rx="24" ry="13" fill="url(#gm1)" opacity="0.6"/><ellipse cx="548" cy="462" rx="24" ry="14" fill="url(#gm1)" opacity="0.55"/><ellipse cx="506" cy="420" rx="40" ry="28" fill="url(#gm1)" opacity="0.7"/></g><ellipse cx="505" cy="418" rx="30" ry="23" fill="url(#gm3)" opacity=".75"/><ellipse cx="504.5" cy="416.5" rx="14" ry="12" fill="url(#gm3)" opacity="1"/><path d="M509.300 316V485" stroke="#0a4414" stroke-width=".6"/><circle cx="509.500" cy="430" r="2.400" fill="#90a8e0" opacity=".55"/><text x="384.300" y="323.600" font-family="Liberation Mono,monospace" font-size="5.800" fill="#d0d0d0" textLength="35.5" lengthAdjust="spacingAndGlyphs">FPS 40.00</text><text x="421" y="319.800" font-family="Liberation Mono,monospace" font-size="5" fill="#8c8c8c" textLength="31" lengthAdjust="spacingAndGlyphs">GhostMist</text></svg></div>
<div class="cap" style="left:1px;top:497px;width:644px;height:19px">Particle Edit Visualizer<svg class="a" style="right:44px;top:6px" width="9" height="6" viewBox="0 0 9 6"><path d="M0 0.5h9L4.5 5.5z" fill="#000"/></svg><svg class="a" style="right:26px;top:3px" width="9" height="12" viewBox="0 0 9 12"><path d="M2.5 .5h4v5.5h-4zM.5 6.5h8M4.5 6.5v5" stroke="#000" stroke-width="1.3" fill="none"/><path d="M5.5 1v5" stroke="#000" stroke-width="1.2"/></svg><svg class="a" style="right:6px;top:4px" width="10" height="10" viewBox="0 0 10 10"><path d="M1 1l8 8M9 1L1 9" stroke="#000" stroke-width="2.1"/></svg></div>
<div class="a" style="left:2px;top:516.2px;width:644px;height:198.8px;overflow:hidden;background:radial-gradient(circle at 3.75px 3.75px,#76829e 0,#76829e 1.2px,transparent 1.6px) 6.5px 6.25px/10px 10px,linear-gradient(100deg,#c4d2ee 0,#dde6f6 45%,#f2f5fc 100%)"><svg class="a" style="left:0;top:0" width="644" height="198.8" viewBox="380.400 494.500 257.600 79.500" preserveAspectRatio="none"><defs><linearGradient id="ny" x1="0" x2="1"><stop offset="0" stop-color="#f2e27a"/><stop offset="1" stop-color="#fffdf2"/></linearGradient><linearGradient id="nr" x1="0" x2="1"><stop offset="0" stop-color="#96100c"/><stop offset=".5" stop-color="#d88c88"/><stop offset="1" stop-color="#fdf4f2"/></linearGradient><linearGradient id="nc" x1="0" x2="1"><stop offset="0" stop-color="#a6e0e2"/><stop offset="1" stop-color="#fafefe"/></linearGradient><filter id="nsh" x="-10%" y="-20%" width="125%" height="150%"><feGaussianBlur stdDeviation=".8"/></filter><pattern id="dots" x="382.200" y="496.700" width="4" height="4" patternUnits="userSpaceOnUse"><rect x="1.600" y="1.600" width=".9" height=".9" fill="#8e9ab4"/></pattern></defs><path d="M431 530.500h6.500L465.500 508.500h7M468.200 558.500h6.300L467.500 509" stroke="#222" stroke-width=".6" fill="none"/><rect x="392.2" y="525.4" width="40" height="14" rx="3" fill="#5a6480" opacity=".45" filter="url(#nsh)"/><rect x="391" y="524" width="40" height="14" rx="3" fill="#fff"/><path d="M391 533.2v-6.2q0-3 3-3h34q3 0 3 3v6.2z" fill="url(#ny)"/><rect x="391" y="524" width="40" height="14" rx="3" fill="none" stroke="#c8c8c0" stroke-width=".4"/><text x="400" y="531.1" font-family="Liberation Sans,sans-serif" font-size="4.400" fill="#222">D; Point</text><rect x="473.7" y="502.1" width="45" height="14.8" rx="3" fill="#5a6480" opacity=".45" filter="url(#nsh)"/><rect x="472.5" y="500.7" width="45" height="14.8" rx="3" fill="#fff"/><path d="M472.5 510.5v-6.8q0-3 3-3h39q3 0 3 3v6.8z" fill="url(#nr)"/><rect x="472.5" y="500.7" width="45" height="14.8" rx="3" fill="none" stroke="#e8a028" stroke-width=".7"/><text x="480.5" y="508.1" font-family="Liberation Sans,sans-serif" font-size="4.400" fill="#222">GhostMist</text><rect x="424.9" y="552.6" width="44.5" height="14.3" rx="3" fill="#5a6480" opacity=".45" filter="url(#nsh)"/><rect x="423.7" y="551.2" width="44.5" height="14.3" rx="3" fill="#fff"/><path d="M423.7 560.6v-6.4q0-3 3-3h38.5q3 0 3 3v6.4z" fill="url(#nc)"/><rect x="423.7" y="551.2" width="44.5" height="14.3" rx="3" fill="none" stroke="#c8c8c0" stroke-width=".4"/><text x="431.5" y="558.4" font-family="Liberation Sans,sans-serif" font-size="4.400" fill="#222">GhostMist</text></svg></div>
<div class="status" style="height:24px"><span class="a" style="left:5px;top:6px">Ready</span><div class="a" style="left:62px;top:4px;width:3px;height:18px;border-left:1px solid #a8a490;border-right:1px solid #fff;background:#c8c4b0"></div></div>
<div class="cap" style="left:651px;top:50px;width:340px;height:19px">Particle Type<svg class="a" style="right:44px;top:6px" width="9" height="6" viewBox="0 0 9 6"><path d="M0 0.5h9L4.5 5.5z" fill="#000"/></svg><svg class="a" style="right:26px;top:3px" width="9" height="12" viewBox="0 0 9 12"><path d="M2.5 .5h4v5.5h-4zM.5 6.5h8M4.5 6.5v5" stroke="#000" stroke-width="1.3" fill="none"/><path d="M5.5 1v5" stroke="#000" stroke-width="1.2"/></svg><svg class="a" style="right:6px;top:4px" width="10" height="10" viewBox="0 0 10 10"><path d="M1 1l8 8M9 1L1 9" stroke="#000" stroke-width="2.1"/></svg></div>
<div class="a" style="left:651px;top:68.8px;width:340px;height:23.8px;background:#ece9d8"><span class="a" style="left:4px;top:5px">Type Name :</span><div class="a" style="left:68px;top:1px;right:2px;height:21px;background:#ece9d8;border:1px solid #d8d4c0;padding:4px 0 0 5px">GhostMist</div></div>
<div class="a" style="left:651px;top:92.5px;width:340px;height:25px;background:#ece9d8"><div class="a" style="left:2px;top:1px;width:23px;height:22px;background:#fff;border:1px solid #7c98d0;border-radius:2px"></div><svg class="a" style="left:6px;top:4px" width="16" height="16" viewBox="0 0 16 16"><rect x="1" y="1" width="5" height="5" fill="#fff" stroke="#4868b8" stroke-width=".9"/><rect x="1" y="9" width="5" height="5" fill="#fff" stroke="#4868b8" stroke-width=".9"/><path d="M2.500 3.500h2M2.500 11.500h2" stroke="#000"/><path d="M8 2h6M8 4h6M8 6h6M8 10h6M8 12h6M8 14h6" stroke="#90a4d8" stroke-width="1"/></svg><svg class="a" style="left:29px;top:4px" width="16" height="16" viewBox="0 0 16 16"><text x="0" y="7" font-size="8" font-weight="bold" fill="#2c50c8" font-family="Liberation Sans,sans-serif">A</text><text x="0" y="15" font-size="8" font-weight="bold" fill="#c82c2c" font-family="Liberation Sans,sans-serif">Z</text><path d="M11 1v11" stroke="#000" stroke-width="1.400"/><path d="M8 10.500h6L11 15z" fill="#000"/></svg><div class="a" style="left:51px;top:3px;width:1px;height:18px;background:#c0bca8"></div><svg class="a" style="left:57px;top:4px" width="16" height="16" viewBox="0 0 16 16"><rect x="1" y="2" width="14" height="12" fill="#e0ded4" stroke="#b0ac9c"/><rect x="3" y="5" width="10" height="7" fill="#d0cec4" stroke="#b8b4a4" stroke-width=".7"/></svg></div>
<div class="a" style="left:651px;top:118.3px;width:340px;height:288.2px;background:#d4d0c8"><div class="a" style="left:0;top:0;right:0;bottom:0;overflow:hidden"><div class="row pgc" style="top:0px"><div class="pm" style="left:3px"></div><span class="a" style="left:19px">01 Common Attributes</span></div><div class="row" style="top:16px"><div class="pm plus" style="left:3px"></div><div class="pgl" style="left:16px;width:135px;">Acceleration</div><div class="pgv" style="left:151px;width:172px;">0.0000,10.0000,0.0000</div></div><div class="row" style="top:32px"><div class="pgl" style="left:16px;width:135px;color:#aca899;">Configuration</div><div class="pgv" style="left:151px;width:172px;color:#aca899;font-weight:normal;">Advanced</div></div><div class="row" style="top:48px"><div class="pm plus" style="left:3px"></div><div class="pgl" style="left:16px;width:135px;">Drag</div><div class="pgv" style="left:151px;width:172px;">0.0000,2.0000,0.0000</div></div><div class="row" style="top:64px"><div class="pgl" style="left:16px;width:135px;">FadePlane</div><div class="pgv" style="left:151px;width:172px;">10000</div></div><div class="row" style="top:80px"><div class="pgl" style="left:16px;width:135px;">FarPlane</div><div class="pgv" style="left:151px;width:172px;">100000</div></div><div class="row" style="top:96px"><div class="pgl" style="left:16px;width:135px;">Height</div><div class="pgv" style="left:151px;width:172px;">10</div></div><div class="row" style="top:112px"><div class="pgl" style="left:16px;width:135px;">LifeSpan</div><div class="pgv" style="left:151px;width:172px;">2</div></div><div class="row" style="top:128px"><div class="pgl" style="left:16px;width:135px;background:#d4d0c8;color:#aca899;">Name</div><div class="pgv" style="left:151px;width:172px;color:#aca899;font-weight:normal;">GhostMist</div></div><div class="row" style="top:144px"><div class="pgl" style="left:16px;width:135px;">Width</div><div class="pgv" style="left:151px;width:172px;">10</div></div><div class="row pgc" style="top:160px"><div class="pm" style="left:3px"></div><span class="a" style="left:19px">02 Simple Attributes</span></div><div class="row" style="top:176px"><div class="pgl" style="left:16px;width:135px;">MaterialName</div><div class="pgv" style="left:151px;width:172px;">fx_GhostMist</div></div><div class="row" style="top:192px"><div class="pgl" style="left:16px;width:135px;">NumberOfSubtextures</div><div class="pgv" style="left:151px;width:172px;">1</div></div><div class="row" style="top:208px"><div class="pgl" style="left:16px;width:135px;">TextureAnimationSpeed</div><div class="pgv" style="left:151px;width:172px;">0</div></div><div class="row pgc" style="top:224px"><div class="pm" style="left:3px"></div><span class="a" style="left:19px">03 Rotation Attributes</span></div><div class="row" style="top:240px"><div class="pgl" style="left:16px;width:135px;">AngularVelocityDrag</div><div class="pgv" style="left:151px;width:172px;">0</div></div><div class="row pgc" style="top:256px"><div class="pm" style="left:3px"></div><span class="a" style="left:19px">04 Advanced Attributes</span></div><div class="row" style="top:272px"><div class="pgl" style="left:16px;width:135px;">BounceDampener</div><div class="pgv" style="left:151px;width:172px;">0</div></div><div class="sb" style="left:323px;top:0;width:17px;height:288px;background:#eef2fc"><div class="sbb" style="left:0;top:0;width:17px;height:17px"><svg class="a" style="left:3px;top:4px" width="9" height="8" viewBox="0 0 9 8"><path d="M1 6l3.500-4L8 6" stroke="#4060a8" stroke-width="2" fill="none"/></svg></div><div class="sbb" style="left:0;top:18px;width:17px;height:235px"><div class="a" style="left:4px;top:205px;width:7px;height:8px;background:repeating-linear-gradient(#e4ecfe 0,#e4ecfe 1px,#a4b8ec 1px,#a4b8ec 2px)"></div></div><div class="sbb" style="left:0;bottom:0;width:17px;height:17px"><svg class="a" style="left:3px;top:4px" width="9" height="8" viewBox="0 0 9 8"><path d="M1 2l3.500 4L8 2" stroke="#4060a8" stroke-width="2" fill="none"/></svg></div></div></div></div>
<div class="a" style="left:651px;top:407.5px;width:340px;height:46.5px;background:#ece9d8;border-bottom:1px solid #aca899"><b class="a" style="left:4px;top:4px">Name</b><span class="a" style="left:4px;top:19px">Name of the Particle Type</span></div>
<div class="a" style="left:651.7px;top:455px;width:89.3px;height:23.8px;color:#8c8878;"><svg class="a" style="left:2px;top:3px" width="16" height="16" viewBox="0 0 16 16"><rect x="1" y="5" width="9" height="8" fill="#e8f0ff" stroke="#2a4cb0"/><rect x="1" y="5" width="9" height="2.500" fill="#3a66d8"/><rect x="6" y="2" width="9" height="8" fill="#e8f0ff" stroke="#2a4cb0"/><rect x="6" y="2" width="9" height="2.500" fill="#3a66d8"/><rect x="4" y="9" width="9" height="6" fill="#cfdcf8" stroke="#2a4cb0"/></svg><span class="a" style="left:20px;top:5px;font-size:11px">Emitter Group</span></div>
<div class="a" style="left:743.5px;top:455px;width:92.5px;height:23.8px;background:#fff;border:1px solid #c8c4b4;border-top:none;color:#000;"><svg class="a" style="left:2px;top:3px" width="16" height="16" viewBox="0 0 16 16"><rect x="1" y="5" width="9" height="8" fill="#e8f0ff" stroke="#2a4cb0"/><rect x="1" y="5" width="9" height="2.500" fill="#3a66d8"/><rect x="6" y="2" width="9" height="8" fill="#e8f0ff" stroke="#2a4cb0"/><rect x="6" y="2" width="9" height="2.500" fill="#3a66d8"/><rect x="4" y="9" width="9" height="6" fill="#cfdcf8" stroke="#2a4cb0"/></svg><span class="a" style="left:20px;top:5px;font-size:11px">Particle Type</span></div>
<div class="cap act" style="left:651px;top:483px;width:340px;height:18px">Envelopes<svg class="a" style="right:44px;top:6px" width="9" height="6" viewBox="0 0 9 6"><path d="M0 0.5h9L4.5 5.5z" fill="#fff"/></svg><svg class="a" style="right:26px;top:3px" width="9" height="12" viewBox="0 0 9 12"><path d="M2.5 .5h4v5.5h-4zM.5 6.5h8M4.5 6.5v5" stroke="#fff" stroke-width="1.3" fill="none"/><path d="M5.5 1v5" stroke="#fff" stroke-width="1.2"/></svg><svg class="a" style="right:6px;top:4px" width="10" height="10" viewBox="0 0 10 10"><path d="M1 1l8 8M9 1L1 9" stroke="#fff" stroke-width="2.1"/></svg></div>
<div class="a" style="left:652px;top:501.5px;width:110.5px;height:186.5px;background:#fff;overflow:hidden;border:1px solid #b8c4d4"><div class="a" style="left:9px;top:9px;width:10px;height:1px;border-top:1px dotted #a0a0a0"></div><svg class="a" style="left:21px;top:1px" width="16" height="16" viewBox="0 0 16 16"><path d="M2 13L5 3l6 10 3-10" stroke="#222" stroke-width="1.200" fill="none"/><path d="M1 13h2M4 3h2M10 13h2M13 3h2" stroke="#3050e0" stroke-width="1.600"/></svg><div class="a" style="left:40px;top:1px;height:16px;padding:1px 2px 0 2px;background:#316ac5;color:#fff;">Envelope 0</div><div class="a" style="left:9px;top:25px;width:10px;height:1px;border-top:1px dotted #a0a0a0"></div><svg class="a" style="left:21px;top:17px" width="16" height="16" viewBox="0 0 16 16"><path d="M2 13L5 3l6 10 3-10" stroke="#222" stroke-width="1.200" fill="none"/><path d="M1 13h2M4 3h2M10 13h2M13 3h2" stroke="#3050e0" stroke-width="1.600"/></svg><div class="a" style="left:40px;top:17px;height:16px;padding:1px 2px 0 2px;">Envelope 1</div><div class="a" style="left:9px;top:41px;width:10px;height:1px;border-top:1px dotted #a0a0a0"></div><svg class="a" style="left:21px;top:33px" width="16" height="16" viewBox="0 0 16 16"><path d="M2 13L5 3l6 10 3-10" stroke="#222" stroke-width="1.200" fill="none"/><path d="M1 13h2M4 3h2M10 13h2M13 3h2" stroke="#3050e0" stroke-width="1.600"/></svg><div class="a" style="left:40px;top:33px;height:16px;padding:1px 2px 0 2px;">Envelope 2</div><div class="a" style="left:9px;top:57px;width:10px;height:1px;border-top:1px dotted #a0a0a0"></div><svg class="a" style="left:21px;top:49px" width="16" height="16" viewBox="0 0 16 16"><path d="M2 13L5 3l6 10 3-10" stroke="#222" stroke-width="1.200" fill="none"/><path d="M1 13h2M4 3h2M10 13h2M13 3h2" stroke="#3050e0" stroke-width="1.600"/></svg><div class="a" style="left:40px;top:49px;height:16px;padding:1px 2px 0 2px;">Envelope 3</div><div class="a" style="left:9px;top:8px;width:1px;height:50px;border-left:1px dotted #a0a0a0"></div><div class="sb" style="left:0;bottom:0;width:100%;height:17px;background:#eef2fc"><div class="sbb" style="left:0;top:0;width:17px;height:17px"><svg class="a" style="left:4px;top:3px" width="8" height="9" viewBox="0 0 8 9"><path d="M6 1L2 4.500 6 8" stroke="#4060a8" stroke-width="2" fill="none"/></svg></div><div class="sbb" style="left:18px;top:0;width:18px;height:17px"></div><div class="sbb" style="right:0;top:0;width:17px;height:17px"><svg class="a" style="left:4px;top:3px" width="8" height="9" viewBox="0 0 8 9"><path d="M2 1l4 3.500L2 8" stroke="#4060a8" stroke-width="2" fill="none"/></svg></div></div></div>
<div class="a" style="left:767.2px;top:510px;width:222.5px;height:178.8px;border:1px solid #d0d0bf;border-radius:4px"></div>
<div class="a" style="left:773.5px;top:502px;width:50px;height:13px;background:#ece9d8;color:#0046d5;padding:0 2px">Envelope</div>
<div class="a" style="left:781px;top:521.2px;width:30px;height:15px;">Field :</div>
<div class="a" style="left:817.2px;top:518.2px;width:133.8px;height:21.2px;background:#fff;border:1px solid #7f9db9"><span class="a" style="left:4px;top:3px">ColorRGB</span><div class="a" style="right:1px;top:1px;width:17px;height:17px;background:linear-gradient(#c8d8fc,#b0c4f4);border-radius:2px;border:1px solid #b4c8f4"><svg class="a" style="left:3px;top:5px" width="9" height="6" viewBox="0 0 9 6"><path d="M1 1l3.500 3.500L8 1" stroke="#4060a8" stroke-width="1.800" fill="none"/></svg></div></div>
<div class="a" style="left:772.2px;top:542.5px;width:22px;height:75px;background:#fff;border:1px solid #c8c4b4;border-top:3px solid #f0a838;border-radius:3px 0 0 0"></div>
<div class="a" style="left:774.8px;top:617.5px;width:19.5px;height:43.8px;background:#f6f5ee;border:1px solid #d0ccb8"></div>
<div class="a" style="left:794px;top:542.5px;width:195.2px;height:144px;background:#ece9d8;border:1px solid #c0bca8;box-shadow:2px 2px 2px #b0ac98"></div>
<svg class="a" style="left:793.5px;top:542.5px" width="197.5" height="145" viewBox="697 505 79 58" preserveAspectRatio="none"><rect x="699.5" y="508.300" width="7.200" height="7.600" rx="1.200" fill="#f0eee2" stroke="#38589c" stroke-width=".7"/><path d="M700.9 512h4.400" stroke="#444" stroke-width=".6" fill="none"/><rect x="709" y="508.300" width="7.200" height="7.600" rx="1.200" fill="#f0eee2" stroke="#38589c" stroke-width=".7"/><path d="M710.4 514.400l4.400-4.600" stroke="#444" stroke-width=".6" fill="none"/><rect x="718.5" y="508.300" width="7.200" height="7.600" rx="1.200" fill="#f0eee2" stroke="#38589c" stroke-width=".7"/><path d="M719.9 509.800l4.400 4.600" stroke="#444" stroke-width=".6" fill="none"/><rect x="728" y="508.300" width="7.200" height="7.600" rx="1.200" fill="#f0eee2" stroke="#38589c" stroke-width=".7"/><path d="M729.4 514.400l1.400-4.600 1.600 4.600 1.400-4.600" stroke="#444" stroke-width=".6" fill="none"/><rect x="737.5" y="508.300" width="7.200" height="7.600" rx="1.200" fill="#f0eee2" stroke="#38589c" stroke-width=".7"/><path d="M738.9 509.800l1.400 4.600 1.600-4.600 1.400 4.600" stroke="#444" stroke-width=".6" fill="none"/><rect x="697.600" y="518" width="76.600" height="34.600" fill="#1a1a1a"/><path d="M710 518V552.500M761 518V552.500" stroke="#4a4a4a" stroke-width=".5"/><path d="M698.500 551.500L710 518.500M761 518.500L773 551.500" stroke="#8c8c8c" stroke-width=".55"/><rect x="708.9" y="517.7" width="2.200" height="2.200" fill="#ff1a1a"/><rect x="759.9" y="517.7" width="2.200" height="2.200" fill="#ff1a1a"/><rect x="697.5" y="550.5" width="2.200" height="2.200" fill="#ff1a1a"/><rect x="772.1" y="550.5" width="2.200" height="2.200" fill="#ff1a1a"/><path d="M698 553.500v2M735.500 553.500v1.500M773.500 553.500v2" stroke="#444" stroke-width=".5"/><text x="697.800" y="561" font-family="Liberation Sans,sans-serif" font-size="4.600" fill="#222">0</text><text x="770.800" y="561" font-family="Liberation Sans,sans-serif" font-size="4.600" fill="#222">2</text></svg>
<div class="a" style="left:651px;top:691.2px;width:340px;height:25.3px;border-top:1px solid #a8b8c8;background:#f5f3ea;border-bottom:1px solid #a8a490"></div>
<div class="a" style="left:651.7px;top:692.5px;width:78px;height:22.5px;background:#fff;border:1px solid #c8c4b4;border-top:none;color:#000;"><svg class="a" style="left:2px;top:3px" width="16" height="16" viewBox="0 0 16 16"><rect x="1" y="5" width="9" height="8" fill="#e8f0ff" stroke="#2a4cb0"/><rect x="1" y="5" width="9" height="2.500" fill="#3a66d8"/><rect x="6" y="2" width="9" height="8" fill="#e8f0ff" stroke="#2a4cb0"/><rect x="6" y="2" width="9" height="2.500" fill="#3a66d8"/><rect x="4" y="9" width="9" height="6" fill="#cfdcf8" stroke="#2a4cb0"/></svg><span class="a" style="left:20px;top:5px;font-size:11px">Envelopes</span></div>
<div class="a" style="left:732.2px;top:692.5px;width:83.8px;height:22.5px;color:#8c8878;"><svg class="a" style="left:2px;top:3px" width="16" height="16" viewBox="0 0 16 16"><rect x="1" y="5" width="9" height="8" fill="#e8f0ff" stroke="#2a4cb0"/><rect x="1" y="5" width="9" height="2.500" fill="#3a66d8"/><rect x="6" y="2" width="9" height="8" fill="#e8f0ff" stroke="#2a4cb0"/><rect x="6" y="2" width="9" height="2.500" fill="#3a66d8"/><rect x="4" y="9" width="9" height="6" fill="#cfdcf8" stroke="#2a4cb0"/></svg><span class="a" style="left:20px;top:5px;font-size:11px">Sine Waves</span></div>
</div></div>
</body></html>
